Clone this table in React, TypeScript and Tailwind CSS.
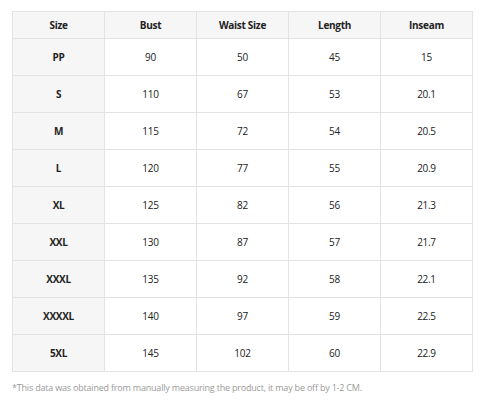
const HEADERS = ['Size', 'Bust', 'Waist Size', 'Length', 'Inseam'];

const ROWS: [string, string, string, string, string][] = [
  ['PP', '90', '50', '45', '15'],
  ['S', '110', '67', '53', '20.1'],
  ['M', '115', '72', '54', '20.5'],
  ['L', '120', '77', '55', '20.9'],
  ['XL', '125', '82', '56', '21.3'],
  ['XXL', '130', '87', '57', '21.7'],
  ['XXXL', '135', '92', '58', '22.1'],
  ['XXXXL', '140', '97', '59', '22.5'],
  ['5XL', '145', '102', '60', '22.9'],
];

export default function App() {
  return (
    <div className="h-[400px] w-[485px] bg-white pl-3 pt-[11px] font-['Open_Sans',sans-serif] text-[#222]">
      <table className="w-[461px] table-fixed border-collapse text-[10px] tracking-[-0.3px]">
        <thead>
          <tr className="h-[27px] bg-[#f6f6f6]">
            {HEADERS.map((h) => (
              <th key={h} className="border border-[#e3e3e3] font-bold">
                {h}
              </th>
            ))}
          </tr>
        </thead>
        <tbody>
          {ROWS.map((row) => (
            <tr key={row[0]} className="h-[37px]">
              {row.map((cell, i) => (
                <td
                  key={i}
                  className={
                    i === 0
                      ? 'border border-[#e3e3e3] bg-[#f6f6f6] text-center font-bold'
                      : 'border border-[#e3e3e3] text-center'
                  }
                >
                  {cell}
                </td>
              ))}
            </tr>
          ))}
        </tbody>
      </table>
      <p className="mt-[9px] text-[9px] tracking-[-0.2px] text-[#9a9a9a]">
        *This data was obtained from manually measuring the product, it may be off by 1-2 CM.
      </p>
    </div>
  );
}
